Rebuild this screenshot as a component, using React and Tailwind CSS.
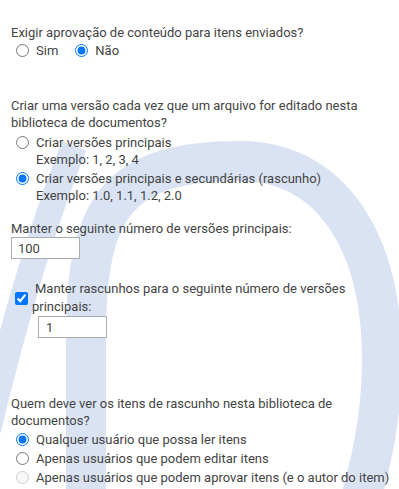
import React from "react";

function Watermark() {
  return (
    <svg
      className="pointer-events-none absolute inset-0 h-full w-full"
      viewBox="0 0 399 489"
      fill="none"
      aria-hidden="true"
    >
      <path
        d="M86 540 L86 335 C86 205 120 161 240 161 C330 161 382 240 382 360 C382 430 366 480 350 540"
        stroke="#dae3f4"
        strokeWidth="40"
      />
      <path d="M74 146 Q28 262 -12 430" stroke="#dae3f4" strokeWidth="26" />
    </svg>
  );
}

function Radio({ name, checked, disabled, className = "" }) {
  return (
    <input
      type="radio"
      name={name}
      defaultChecked={checked}
      disabled={disabled}
      className={"ml-[5px] mr-[7px] h-[13px] w-[13px] shrink-0 " + className}
    />
  );
}

export default function App() {
  return (
    <div className="relative h-[489px] w-[399px] overflow-hidden bg-white font-['Roboto',sans-serif] text-[13px] leading-[17px] text-[#444444]">
      <Watermark />
      <div className="relative pl-[11px] pr-[3px] pt-[24px]">
        {/* Section 1 */}
        <p>Exigir aprovação de conteúdo para itens enviados?</p>
        <div className="flex h-[19px] items-center">
          <label className="flex items-center">
            <Radio name="aprov" />
            Sim
          </label>
          <label className="ml-[12px] flex items-center">
            <Radio name="aprov" checked />
            Não
          </label>
        </div>

        {/* Section 2 */}
        <p className="mt-[37px]">
          Criar uma versão cada vez que um arquivo for editado nesta
          <br />
          biblioteca de documentos?
        </p>
        <label className="mt-[3px] flex">
          <Radio name="versao" className="mt-[2px]" />
          <span>
            <span className="block">Criar versões principais</span>
            <span className="block">Exemplo: 1, 2, 3, 4</span>
          </span>
        </label>
        <label className="mt-[2px] flex">
          <Radio name="versao" checked className="mt-[2px]" />
          <span>
            <span className="block">Criar versões principais e secundárias (rascunho)</span>
            <span className="block">Exemplo: 1.0, 1.1, 1.2, 2.0</span>
          </span>
        </label>

        {/* Section 3 */}
        <p className="mt-[16px]">Manter o seguinte número de versões principais:</p>
        <input
          type="text"
          defaultValue="100"
          className="block h-[22px] w-[69px] border border-[#ababab] bg-white px-[6px] text-[13px] text-[#444444] outline-none"
        />

        {/* Section 4 */}
        <div className="mt-[21px] grid grid-cols-[21px_1fr]">
          <div className="flex items-center">
            <input type="checkbox" defaultChecked className="ml-[4px] h-[13px] w-[13px]" />
          </div>
          <p className="indent-[3px] leading-[18px]">
            Manter rascunhos para o seguinte número de versões
            <br />
            principais:
          </p>
          <div />
          <input
            type="text"
            defaultValue="1"
            className="ml-[6px] block h-[22px] w-[69px] border border-[#ababab] bg-white px-[7px] text-[13px] text-[#444444] outline-none"
          />
        </div>

        {/* Section 5 */}
        <p className="mt-[57px]">
          Quem deve ver os itens de rascunho nesta biblioteca de
          <br />
          documentos?
        </p>
        <label className="mt-[1px] flex h-[19px] items-center whitespace-nowrap">
          <Radio name="quem" checked />
          Qualquer usuário que possa ler itens
        </label>
        <label className="flex h-[19px] items-center whitespace-nowrap">
          <Radio name="quem" />
          Apenas usuários que podem editar itens
        </label>
        <label className="flex h-[19px] items-center whitespace-nowrap">
          <Radio name="quem" disabled />
          Apenas usuários que podem aprovar itens (e o autor do item)
        </label>
      </div>
    </div>
  );
}
